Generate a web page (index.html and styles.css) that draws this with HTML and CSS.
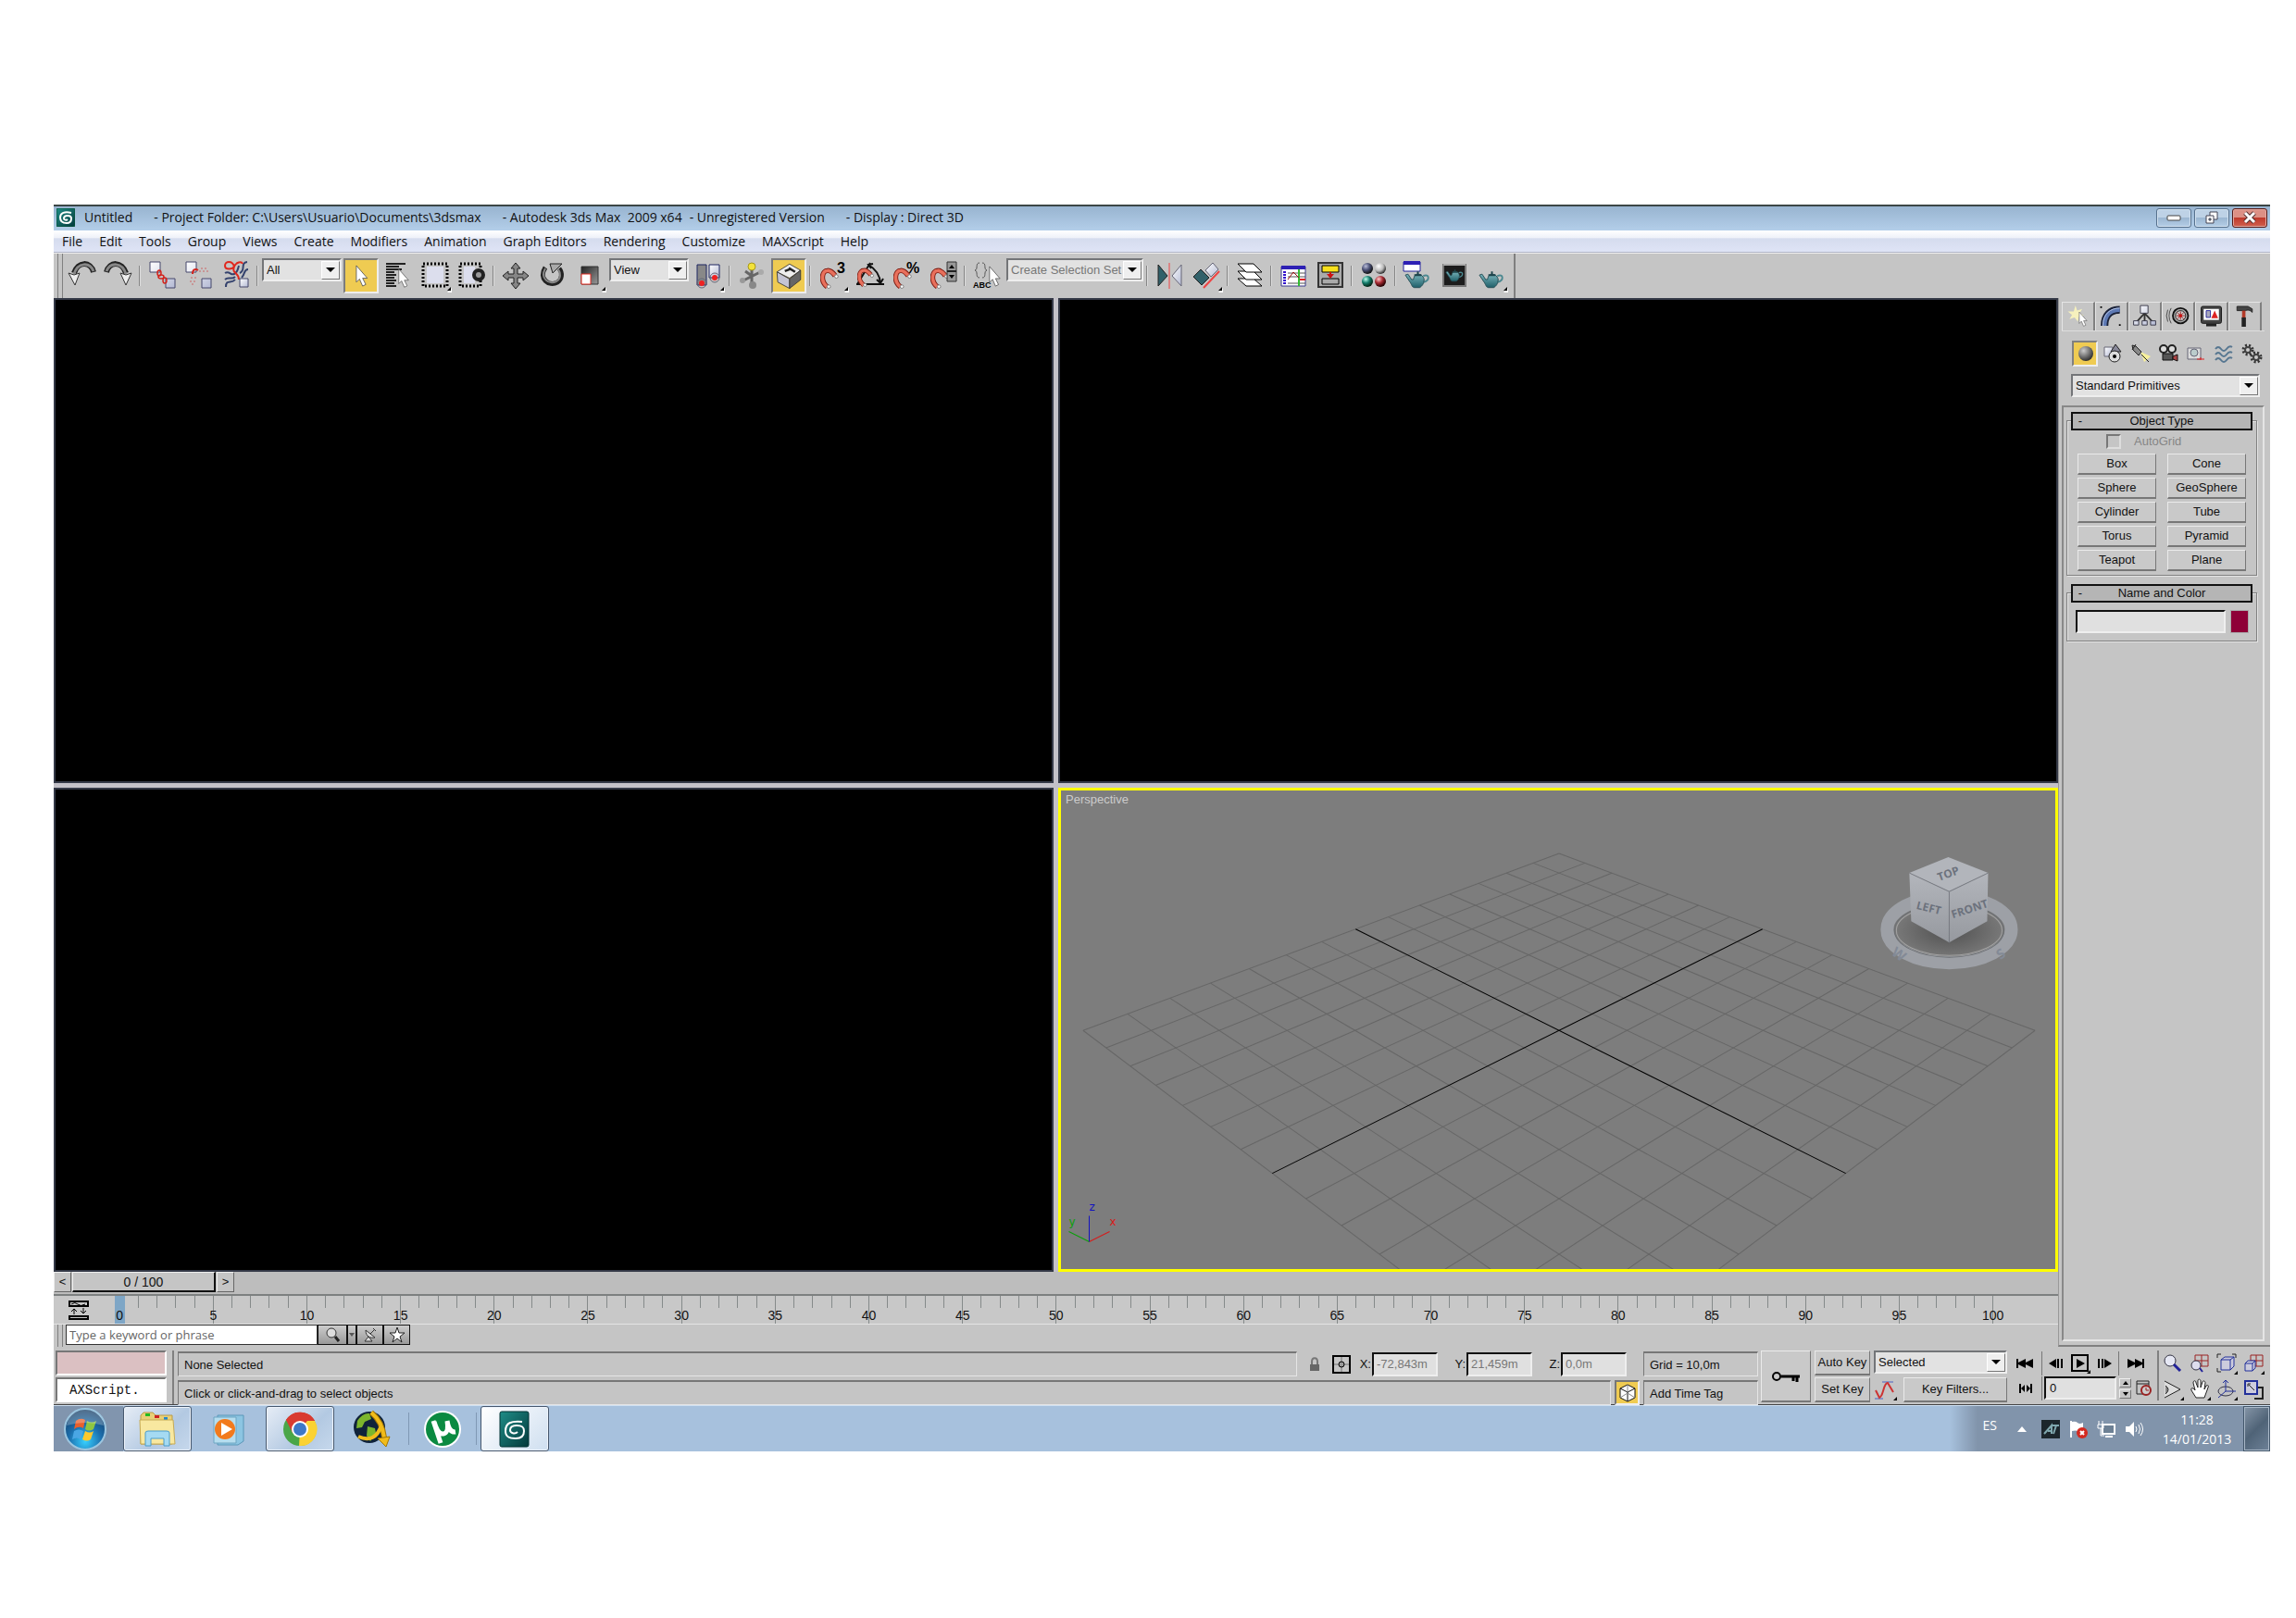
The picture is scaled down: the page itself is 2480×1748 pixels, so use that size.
FILE: index.html
```html
<!DOCTYPE html>
<html lang="en">
<head>
  <meta charset="UTF-8">
  <title>Untitled - Autodesk 3ds Max 2009 x64</title>
  <link rel="stylesheet" href="styles.css">
</head>
<body>
  <!-- shared gradients and symbols -->
  <svg class="defs" width="0" height="0" aria-hidden="true">
    <defs>
      <linearGradient id="steel" x1="0" y1="0" x2="1" y2="1"><stop offset="0" stop-color="#fff"/><stop offset="1" stop-color="#b4bad4"/></linearGradient>
      <linearGradient id="dark" x1="0" y1="0" x2="1" y2="1"><stop offset="0" stop-color="#222"/><stop offset="1" stop-color="#999"/></linearGradient>
      <linearGradient id="teal" x1="0" y1="0" x2="0" y2="1"><stop offset="0" stop-color="#79b4bb"/><stop offset="1" stop-color="#1f5f69"/></linearGradient>
      <linearGradient id="mint" x1="0" y1="0" x2="1" y2="1"><stop offset="0" stop-color="#1f8d87"/><stop offset="1" stop-color="#03393b"/></linearGradient>
      <radialGradient id="ballGray" cx=".35" cy=".3" r=".7"><stop offset="0" stop-color="#ccc"/><stop offset="1" stop-color="#333"/></radialGradient>
      <radialGradient id="ballBlue" cx=".35" cy=".3" r=".7"><stop offset="0" stop-color="#b9bdd8"/><stop offset=".5" stop-color="#4b5177"/><stop offset="1" stop-color="#111"/></radialGradient>
      <radialGradient id="ballWhite" cx=".35" cy=".3" r=".7"><stop offset="0" stop-color="#fff"/><stop offset=".6" stop-color="#bbb"/><stop offset="1" stop-color="#333"/></radialGradient>
      <radialGradient id="ballGreen" cx=".35" cy=".3" r=".7"><stop offset="0" stop-color="#bfe"/><stop offset=".5" stop-color="#157d6c"/><stop offset="1" stop-color="#021"/></radialGradient>
      <radialGradient id="ballRed" cx=".35" cy=".3" r=".7"><stop offset="0" stop-color="#fcc"/><stop offset=".5" stop-color="#a82c34"/><stop offset="1" stop-color="#200"/></radialGradient>
      <radialGradient id="orb" cx=".5" cy=".8" r=".8"><stop offset="0" stop-color="#37d0ff"/><stop offset=".5" stop-color="#1c6fae"/><stop offset="1" stop-color="#16395f"/></radialGradient>
      <linearGradient id="cubeSide" x1="0" y1="0" x2="0" y2="1"><stop offset="0" stop-color="#b3b6bc"/><stop offset="1" stop-color="#96999f"/></linearGradient>
      <radialGradient id="shade"><stop offset="0" stop-color="#505050"/><stop offset="1" stop-color="#7a7a7a"/></radialGradient>
      <symbol id="fly" viewBox="0 0 40 40"><path d="M38 33v5h-5z" fill="#fff"/><path d="M37 32v4h-4z"/></symbol>
      <symbol id="arrow" viewBox="0 0 16 28"><path d="M1 1v21l4-4 4 9 4-2-4-8h6z" fill="#fff" stroke="#555"/></symbol>
      <symbol id="magnet" viewBox="0 0 24 26"><path d="M7 23C-1 14 4 3 10 4c3 0 5 2 8 7" transform="rotate(-8 10 14)" fill="none" stroke="#7d1c12" stroke-width="6"/><path d="M7 23C-1 14 4 3 10 4c3 0 5 2 8 7" transform="rotate(-8 10 14)" fill="none" stroke="#e8705c" stroke-width="4"/><circle cx="19" cy="11" r="2" fill="#fff" stroke="#777"/><circle cx="10" cy="23" r="2" fill="#fff" stroke="#777"/></symbol>
      <symbol id="teapot" viewBox="0 0 30 20"><path d="M21 6c7-3 8 5 0 7" fill="none" stroke="#4b8890" stroke-width="2"/><path d="M1 5l3-1 4 6h2C11 5 13 4 15 4s6 1 7 6c0 5-3 8-5 9h-6c-2 0-3-3-4-5z" fill="url(#teal)" stroke="#254f56"/><path d="M11 5h8M15 1v3" stroke="#1e444b" stroke-width="2"/></symbol>
    </defs>
  </svg>

  <div class="window">
    <header class="titlebar">
      <svg class="app-icon" width="20" height="20" viewBox="0 0 20 20"><rect width="20" height="20" rx="2" fill="url(#mint)" stroke="#053"/><path d="M16 5C9 3 4 5 4 10s3 6 7 6 5-3 5-5-2-3-4-3-4 1-4 3 3 2 4 1" fill="none" stroke="#fff" stroke-width="2"/></svg>
      <span class="doc">Untitled</span>
      <span class="doc">- Project Folder: C:\Users\Usuario\Documents\3dsmax</span>
      <span>- Autodesk 3ds Max&nbsp; 2009 x64</span>
      <span class="doc near">- Unregistered Version</span>
      <span>- Display : Direct 3D</span>
      <div class="win-buttons">
        <button class="win" aria-label="Minimize"><svg width="16" height="14" viewBox="0 0 16 14"><rect x="1" y="5" width="14" height="5" rx="1" fill="#fff" stroke="#444"/></svg></button>
        <button class="win" aria-label="Restore"><svg width="16" height="16" viewBox="0 0 16 16"><path d="M6 2h8v8h-8z" fill="#fff" stroke="#445"/><path d="M2 6h8v8h-8z" fill="#fff" stroke="#445"/><path d="M5 9h2v2h-2z" fill="#8aa" stroke="#445"/></svg></button>
        <button class="win close" aria-label="Close"><svg width="16" height="14" viewBox="0 0 16 14"><path d="M3 2l10 10M13 2L3 12" stroke="#533" stroke-width="5"/><path d="M3 2l10 10M13 2L3 12" stroke="#fff" stroke-width="3"/></svg></button>
      </div>
    </header>

    <nav class="menubar">
      <a href="#">File</a><a href="#">Edit</a><a href="#">Tools</a><a href="#">Group</a><a href="#">Views</a><a href="#">Create</a><a href="#">Modifiers</a><a href="#">Animation</a><a href="#">Graph Editors</a><a href="#">Rendering</a><a href="#">Customize</a><a href="#">MAXScript</a><a href="#">Help</a>
    </nav>

    <div class="toolbar-row">
      <div class="toolbar">
        <span class="grip"></span>
        <button class="tool" aria-label="Undo"><svg viewBox="0 0 40 40"><path d="M33 16C30 4 16 4 12 17" fill="none" stroke="#222" stroke-width="6"/><path d="M33 15C29 5 16 5 12 18" fill="none" stroke="#888" stroke-width="3"/><path d="M6 17l6 2 6-2-5 13z" fill="#eee" stroke="#333"/></svg></button>
        <button class="tool" aria-label="Redo"><svg viewBox="0 0 40 40"><path d="M7 16C10 4 24 4 28 17" fill="none" stroke="#222" stroke-width="6"/><path d="M7 15C11 5 24 5 28 18" fill="none" stroke="#888" stroke-width="3"/><path d="M34 17l-6 2-6-2 6 13z" fill="#eee" stroke="#333"/></svg></button>
        <span class="sep"></span>
        <button class="tool" aria-label="Select and Link"><svg viewBox="0 0 40 40"><g fill="url(#steel)" stroke="#44476a"><path d="M7 5h11v11H7zM24 23h10v10H24z"/></g><g fill="none" stroke="#d3231c" stroke-width="1.5"><ellipse cx="17" cy="17" rx="2" ry="3"/><ellipse cx="19" cy="21" rx="3" ry="2"/><ellipse cx="23" cy="25" rx="2" ry="3"/></g></svg></button>
        <button class="tool" aria-label="Unlink Selection"><svg viewBox="0 0 40 40"><g fill="url(#steel)" stroke="#44476a"><path d="M6 5h11v11H6zM23 23h10v10H23z"/></g><path d="M13 18c0-5 3-6 6-4" fill="none" stroke="#d3231c" stroke-width="2"/><path d="M22 12h7M20 15h10M11 22h7M10 26h6M12 29h4" stroke="#c66" stroke-dasharray="2 2"/></svg></button>
        <button class="tool" aria-label="Bind to Space Warp"><svg viewBox="0 0 40 40"><g fill="none" stroke="#34426d" stroke-width="2"><path d="M8 17c5-3 6 3 10 1s4-6 5-9M8 24c4-4 7 1 11-3M9 32c0-9 6-3 10-8M32 5c-8 1-1 9-8 12M33 13c-5 0-3 5-7 9"/></g><path d="M18 10C16 3 8 4 8 9s8 4 10 1c2-5 8-6 9-3M18 10c-3 8 5 6 5 14" fill="none" stroke="#e0281e" stroke-width="2"/><path d="M24 23h9v9h-9z" fill="url(#steel)" stroke="#44476a"/></svg></button>
        <span class="sep"></span>
        <span class="combo"><select class="w86" aria-label="Selection filter"><option>All</option></select><i class="drop"></i></span>
        <button class="tool on" aria-label="Select Object"><svg viewBox="0 0 40 40"><use href="#arrow" x="13" y="6" width="16" height="28"/></svg></button>
        <button class="tool" aria-label="Select by Name"><svg viewBox="0 0 40 40"><path d="M7 7h21M7 10h14M7 13h17M7 16h9M7 19h11M7 22h9M7 25h11M7 28h9M7 31h11" stroke="#222" stroke-width="2"/><use href="#arrow" x="19" y="12" width="14" height="21"/></svg></button>
        <button class="tool" aria-label="Rectangular Selection Region"><svg viewBox="0 0 40 40"><path d="M7 7h26v24H7z" fill="none" stroke="#000" stroke-width="3" stroke-dasharray="2 2"/><path d="M11 10h18v18H11z" fill="#dcdeed"/><use href="#fly" width="40" height="40"/></svg></button>
        <button class="tool" aria-label="Window / Crossing"><svg viewBox="0 0 40 40"><path d="M7 7h22v24H7z" fill="none" stroke="#000" stroke-width="3" stroke-dasharray="2 2"/><path d="M11 10h12v18H11z" fill="#dcdeed"/><circle cx="27" cy="19" r="7" fill="#222"/><circle cx="27" cy="19" r="3" fill="#999"/></svg></button>
        <span class="sep"></span>
        <button class="tool" aria-label="Select and Move"><svg viewBox="0 0 40 40"><path d="M20 6l5 6h-3v6h6v-3l6 5-6 5v-3h-6v6h3l-5 6-5-6h3v-6h-6v3l-6-5 6-5v3h6v-6h-3z" fill="#868686" stroke="#222"/></svg></button>
        <button class="tool" aria-label="Select and Rotate"><svg viewBox="0 0 40 40"><path d="M12 11c-8 12 4 21 13 16 5-3 6-10 2-15" fill="none" stroke="#222" stroke-width="5"/><path d="M12 12c-6 11 4 18 12 14 5-3 5-9 2-13" fill="none" stroke="#888" stroke-width="2"/><path d="M17 7h13l-3 3-7 7z" fill="#aaa" stroke="#222"/></svg></button>
        <button class="tool" aria-label="Select and Scale"><svg viewBox="0 0 40 40"><path d="M11 10h18v19H11z" fill="url(#dark)" stroke="#333"/><path d="M11 18h10v11H11z" fill="#fff" stroke="#e2281e"/><use href="#fly" width="40" height="40"/></svg></button>
        <span class="combo"><select class="w86" aria-label="Reference coordinate system"><option>View</option></select><i class="drop"></i></span>
        <button class="tool" aria-label="Use Pivot Point Center"><svg viewBox="0 0 40 40"><path d="M8 8h10v22H8z" fill="#888" stroke="#1d2460"/><path d="M21 8h11v14H21z" fill="url(#steel)" stroke="#1d2460"/><g fill="none" stroke="#667"><circle cx="13" cy="28" r="5"/><circle cx="27" cy="22" r="5"/></g><circle cx="13" cy="28" r="3" fill="#e22"/><circle cx="27" cy="22" r="3" fill="#e22"/><use href="#fly" width="40" height="40"/></svg></button>
        <span class="sep"></span>
        <button class="tool" aria-label="Select and Manipulate"><svg viewBox="0 0 40 40"><path d="M20 11v18M11 25l18-9M13 15l7 5" stroke="#666" stroke-width="3"/><circle cx="20" cy="10" r="4" fill="#f3e23b" stroke="#a99a1a"/><circle cx="10" cy="25" r="3" fill="#999"/><circle cx="30" cy="16" r="3" fill="#aaa"/><circle cx="21" cy="30" r="4" fill="#888"/></svg></button>
        <button class="tool on" aria-label="Keyboard Shortcut Override"><svg viewBox="0 0 40 40"><path d="M5 15l16-10 14 8-14 10z" fill="#eee" stroke="#333"/><path d="M5 15l16 9v12L6 28z" fill="#c4c4d4" stroke="#333"/><path d="M35 13v12l-14 11V24z" fill="#666" stroke="#333"/><path d="M15 14l8-3M20 10l8 5" stroke="#222" stroke-width="3"/></svg></button>
        <span class="sep"></span>
        <button class="tool" aria-label="Snaps Toggle"><svg viewBox="0 0 40 40"><use href="#magnet" x="7" y="10" width="22" height="25"/><text x="25" y="17" class="glyph">3</text><use href="#fly" width="40" height="40"/></svg></button>
        <button class="tool" aria-label="Angle Snap Toggle"><svg viewBox="0 0 40 40"><path d="M6 29h30M7 29L21 6M19 8q12 7 13 20M28 24l4 4 3-5M24 7l-5 1 3 4" fill="none" stroke="#111" stroke-width="2"/><use href="#magnet" x="7" y="10" width="20" height="23"/></svg></button>
        <button class="tool" aria-label="Percent Snap Toggle"><svg viewBox="0 0 40 40"><use href="#magnet" x="6" y="10" width="22" height="25"/><text x="20" y="17" class="glyph">%</text></svg></button>
        <button class="tool" aria-label="Spinner Snap Toggle"><svg viewBox="0 0 40 40"><use href="#magnet" x="6" y="10" width="22" height="25"/><path d="M24 5h10v21H24z" fill="#999" stroke="#333"/><path d="M24 15h10" stroke="#222" stroke-width="2"/><path d="M26 12l3-4 3 4zM26 19h6l-3 4z"/></svg></button>
        <span class="sep"></span>
        <button class="tool" aria-label="Edit Named Selection Sets"><svg viewBox="0 0 40 40"><path d="M12 6c-5 0-1 7-5 8 4 1 0 8 5 8M15 6c5 0 1 7 5 8-4 1 0 8-5 8" fill="none" stroke="#555"/><text x="5" y="33" class="glyph small">ABC</text><use href="#arrow" x="22" y="9" width="13" height="23"/></svg></button>
        <span class="combo"><select class="w148 dim" aria-label="Named selection sets"><option>Create Selection Set</option></select><i class="drop"></i></span>
        <span class="sep"></span>
        <button class="tool" aria-label="Mirror"><svg viewBox="0 0 40 40"><path d="M8 8l10 12L8 31z" fill="#31616a" stroke="#222"/><path d="M33 8L23 20l10 11z" fill="url(#steel)" stroke="#667"/><path d="M20 6v28" stroke="#e44"/></svg></button>
        <button class="tool" aria-label="Align"><svg viewBox="0 0 40 40"><path d="M6 21l8-8 9 9-8 8z" fill="#31616a" stroke="#222"/><path d="M19 14l8-8 6 7-8 8z" fill="url(#steel)" stroke="#667"/><path d="M17 33l17-18" stroke="#e44" stroke-width="2"/><use href="#fly" width="40" height="40"/></svg></button>
        <span class="sep"></span>
        <button class="tool" aria-label="Layer Manager"><svg viewBox="0 0 40 40"><g fill="#fff" stroke="#000"><path d="M7 23h17l9 8H16z"/><path d="M7 15h17l9 9H16z"/><path d="M7 7h17l9 9H16z"/></g></svg></button>
        <span class="sep"></span>
        <button class="tool" aria-label="Curve Editor"><svg viewBox="0 0 40 40"><path d="M7 10h26v21H7z" fill="#fff" stroke="#3b3b8a"/><path d="M7 9h26v4H7z" fill="#2d20b4"/><path d="M14 17h19M14 21h19M14 28h19" stroke="#555"/><path d="M26 24h7" stroke="#d22" stroke-width="2"/><path d="M9 16h3M9 19h3M9 22h3M9 25h3M9 28h3" stroke="#31c" stroke-width="2"/><path d="M26 13v18" stroke="#3b3" stroke-width="2"/><path d="M14 24l6-8 6 6" fill="none" stroke="#911"/></svg></button>
        <button class="tool" aria-label="Schematic View"><svg viewBox="0 0 40 40"><path d="M7 6h26v26H7z" fill="#aaa" stroke="#333" stroke-width="2"/><path d="M11 9h18v7H11z" fill="#f7e01d" stroke="#000"/><path d="M11 23h18v6H11z" fill="#aaa" stroke="#000"/><path d="M20 16v4" stroke="#c11" stroke-width="2"/><path d="M16 18h8l-4 5z" fill="#c11"/></svg></button>
        <span class="sep"></span>
        <button class="tool" aria-label="Material Editor"><svg viewBox="0 0 40 40"><circle cx="13" cy="12" r="6" fill="url(#ballBlue)"/><circle cx="27" cy="12" r="6" fill="url(#ballWhite)"/><circle cx="13" cy="26" r="6" fill="url(#ballGreen)"/><circle cx="27" cy="26" r="6" fill="url(#ballRed)"/></svg></button>
        <span class="sep"></span>
        <button class="tool" aria-label="Render Setup"><svg viewBox="0 0 40 40"><path d="M5 5h18v10H5z" fill="#fff" stroke="#229"/><path d="M5 4h18v4H5z" fill="#2d20b4"/><use href="#teapot" x="6" y="14" width="29" height="20"/></svg></button>
        <button class="tool" aria-label="Rendered Frame Window"><svg viewBox="0 0 40 40"><path d="M8 8h24v23H8z" fill="#1c1c1c" stroke="#777" stroke-width="2"/><path d="M8 8h24" stroke="#aaa" stroke-width="2"/><use href="#teapot" x="10" y="12" width="21" height="15"/></svg></button>
        <button class="tool" aria-label="Quick Render"><svg viewBox="0 0 40 40"><use href="#teapot" x="6" y="14" width="29" height="20"/><use href="#fly" width="40" height="40"/></svg></button>
      </div>
    </div>

    <div class="main">
      <div class="work">
        <div class="viewports">
          <div class="view"></div>
          <div class="view"></div>
          <div class="view"></div>
          <div class="view active">
            <svg class="scene" viewBox="0 0 1074 517" preserveAspectRatio="xMidYMid slice">
              <g id="grid"></g>
              <g fill="none" stroke-width="1">
                <path d="M31 487l22-11" stroke="#d81a1a"/><path d="M31 487l-22-11" stroke="#0aa00a"/><path d="M31 487v-28" stroke="#1313c0"/>
              </g>
              <g class="axis"><text x="31" y="454" fill="#1313c0">z</text><text x="53" y="470" fill="#d81a1a">x</text><text x="9" y="470" fill="#0aa00a">y</text></g>
              <!-- view cube -->
              <ellipse cx="959" cy="151" rx="60" ry="31" fill="url(#shade)"/>
              <ellipse cx="959" cy="150" rx="67" ry="36" fill="none" stroke="#9da0a6" stroke-width="14"/>
              <ellipse cx="959" cy="151" rx="59" ry="29" fill="none" stroke="#6d7074"/>
              <ellipse cx="959" cy="151" rx="57" ry="27" fill="none" stroke="#a3a3a3"/>
              <g class="compass"><text x="897" y="181" transform="rotate(35 903 177)">W</text><text x="1011" y="181" transform="rotate(-35 1016 177)">S</text></g>
              <path d="M916 89l43 20v55l-41-23z" fill="url(#cubeSide)"/>
              <path d="M1001 89l-42 20v55l41-23z" fill="url(#cubeSide)"/>
              <path d="M958 72l43 17-42 20-43-20z" fill="#b2b5bb"/>
              <path d="M916 89l43 20 42-20M959 109v55" fill="none" stroke="#787b82"/>
              <g class="cube-text"><text x="937" y="131" transform="rotate(14 937 127)">LEFT</text><text x="981" y="132" transform="rotate(-18 981 128)">FRONT</text><text x="958" y="94" transform="rotate(-20 958 90)">TOP</text></g>
            </svg>
            <span class="view-label">Perspective</span>
          </div>
        </div>

        <div class="time-slider">
          <button class="step" aria-label="Previous frame">&lt;</button>
          <button class="thumb">0 / 100</button>
          <button class="step" aria-label="Next frame">&gt;</button>
        </div>

        <div class="trackbar">
          <button class="mini-curve" aria-label="Open Mini Curve Editor"><svg width="24" height="24" viewBox="0 0 24 24"><path d="M2 3h20v5H2zM2 19h20v3H2z" fill="none" stroke="#000" stroke-width="2"/><path d="M4 6q4-3 7 0t8 0" fill="none" stroke="#000"/><path d="M7 17v-6M4 14l3-3 3 3M17 10v6M14 13l3 3 3-3" fill="none" stroke="#000"/></svg></button>
          <div class="ruler" id="ruler"></div>
        </div>

        <div class="infocenter">
          <span class="grip"></span>
          <input type="text" class="keyword" aria-label="Search" placeholder="Type a keyword or phrase">
          <button class="info wide" aria-label="Search"><svg width="20" height="18" viewBox="0 0 20 18"><circle cx="9" cy="7" r="5" fill="#ddd" stroke="#333"/><path d="M13 11l4 5" stroke="#222" stroke-width="3"/></svg></button>
          <button class="info thin" aria-label="Search options"><svg width="6" height="4" viewBox="0 0 6 4"><path d="M0 0h6L3 4z" fill="#555"/></svg></button>
          <button class="info" aria-label="Communication Center"><svg width="18" height="18" viewBox="0 0 18 18"><path d="M4 4c0 7 5 9 10 8zM9 8l5-5M3 16l4-5 4 5z" fill="#ddd" stroke="#333"/><path d="M12 2l3 3" stroke="#333"/></svg></button>
          <button class="info" aria-label="Favorites"><svg width="18" height="18" viewBox="0 0 18 18"><path d="M9 1l2 6h6l-5 4 2 6-5-4-5 4 2-6-5-4h6z" fill="#fff" stroke="#222"/></svg></button>
        </div>
      </div>

      <aside class="panel">
        <div class="tabs">
          <button class="tab current" aria-label="Create"><svg viewBox="0 0 36 30"><path d="M15 2l2 6 6-2-3 5 5 3-6 1-1 6-4-5-6 2 3-5-5-4 7 0z" fill="#f6f1bd"/><use href="#arrow" x="17" y="9" width="14" height="18"/></svg></button>
          <button class="tab" aria-label="Modify"><svg viewBox="0 0 36 30"><path d="M10 26C10 13 17 7 28 7" fill="none" stroke="#1b2238" stroke-width="9"/><path d="M10 26C10 13 17 7 28 7" fill="none" stroke="#5d79b4" stroke-width="5"/><path d="M8 26C8 12 17 5 28 5" fill="none" stroke="#bccbe8"/><path d="M5 3h2v2H5zM27 24h2v2h-2z"/></svg></button>
          <button class="tab" aria-label="Hierarchy"><svg viewBox="0 0 36 30"><path d="M18 10v12M18 11L8 22M18 11l10 11" stroke="#333" stroke-width="2"/><path d="M13 2h9v9h-9zM5 20h6v5H5zM15 20h6v5h-6zM25 20h6v5h-6z" fill="url(#steel)" stroke="#334"/></svg></button>
          <button class="tab" aria-label="Motion"><svg viewBox="0 0 36 30"><circle cx="21" cy="14" r="9" fill="#aaa" stroke="#111" stroke-width="2"/><circle cx="21" cy="14" r="6" fill="#ccc" stroke="#222"/><path d="M21 9v10M16 14h10M17 10l8 8M25 10l-8 8" stroke="#922"/><circle cx="21" cy="14" r="2" fill="#c11"/><path d="M10 5q-5 9 0 18M6 7q-3 7 0 14" fill="none" stroke="#444"/></svg></button>
          <button class="tab" aria-label="Display"><svg viewBox="0 0 36 30"><rect x="6" y="3" width="24" height="20" rx="2" fill="#444" stroke="#111"/><path d="M9 6h18v13H9z" fill="#fff"/><path d="M12 8h5v8h-5z" fill="#aab" stroke="#229"/><path d="M22 8l4 9h-8z" fill="#d22"/><path d="M12 25h12" stroke="#222" stroke-width="3"/></svg></button>
          <button class="tab" aria-label="Utilities"><svg viewBox="0 0 36 30"><path d="M9 3h13l5 3v4c-3-3-5-3-8-2H9z" fill="#444" stroke="#222"/><path d="M17 8v10" stroke="#b33a28" stroke-width="4"/><path d="M17 16v11" stroke="#222" stroke-width="5"/></svg></button>
        </div>
        <div class="categories">
          <button class="cat on" aria-label="Geometry"><svg viewBox="0 0 28 28"><circle cx="15" cy="14" r="8" fill="url(#ballGray)"/></svg></button>
          <button class="cat" aria-label="Shapes"><svg viewBox="0 0 28 28"><path d="M5 7h9v10H5z" fill="url(#steel)" stroke="#667"/><path d="M17 4l6 8h-11z" fill="#889" stroke="#222"/><circle cx="16" cy="17" r="6" fill="#ddd" stroke="#222"/><circle cx="16" cy="17" r="2"/></svg></button>
          <button class="cat" aria-label="Lights"><svg viewBox="0 0 28 28"><path d="M14 12l11 5-7 6z" fill="#f7f09c"/><path d="M5 5l4 1 6 6-3 4-6-6z" fill="#888" stroke="#222"/><path d="M9 4l-4 6M15 15l8 8" stroke="#222"/></svg></button>
          <button class="cat" aria-label="Cameras"><svg viewBox="0 0 28 28"><circle cx="9" cy="9" r="4" fill="#ddd" stroke="#222" stroke-width="2"/><circle cx="18" cy="9" r="4" fill="#ddd" stroke="#222" stroke-width="2"/><path d="M8 14h11v7H8z" fill="#555" stroke="#111"/><path d="M19 17l5-2v7l-5-2z" fill="#a44" stroke="#111"/></svg></button>
          <button class="cat" aria-label="Helpers"><svg viewBox="0 0 28 28"><path d="M5 8h14v12H5z" fill="#ddd" stroke="#667"/><circle cx="12" cy="13" r="4" fill="#bcc" stroke="#667"/><path d="M15 20h8M19 18v3" stroke="#d22"/></svg></button>
          <button class="cat" aria-label="Space Warps"><svg viewBox="0 0 28 28"><path d="M5 9q3-4 6 0t6 0 6-2M5 15q3-4 6 0t6 0 6-2M5 21q3-4 6 0t6 0 6-2" fill="none" stroke="#567690" stroke-width="2"/></svg></button>
          <button class="cat" aria-label="Systems"><svg viewBox="0 0 28 28"><g fill="#ccc" stroke="#444" stroke-width="2"><circle cx="10" cy="10" r="3"/><circle cx="19" cy="18" r="3"/></g><g fill="none" stroke="#333" stroke-width="3" stroke-dasharray="2 2"><circle cx="10" cy="10" r="5"/><circle cx="19" cy="18" r="5"/></g></svg></button>
        </div>
        <span class="combo wide-combo"><select aria-label="Category"><option>Standard Primitives</option></select><i class="drop"></i></span>

        <div class="rollouts">
          <section class="rollout">
            <h2><span>-</span>Object Type</h2>
            <label class="autogrid"><input type="checkbox" disabled>AutoGrid</label>
            <div class="types">
              <button>Box</button><button>Cone</button>
              <button>Sphere</button><button>GeoSphere</button>
              <button>Cylinder</button><button>Tube</button>
              <button>Torus</button><button>Pyramid</button>
              <button>Teapot</button><button>Plane</button>
            </div>
          </section>
          <section class="rollout">
            <h2><span>-</span>Name and Color</h2>
            <div class="name-row"><input type="text" aria-label="Object name"><button class="swatch" aria-label="Object color"></button></div>
          </section>
        </div>
      </aside>
    </div>

    <div class="status">
      <div class="listener">
        <input type="text" class="macro" aria-label="Macro recorder">
        <input type="text" class="script" aria-label="MAXScript listener" value="AXScript.">
      </div>
      <div class="prompts">
        <div class="prompt-row">
          <div class="box grow">None Selected</div>
          <button class="plain lock" aria-label="Selection Lock Toggle"><svg width="12" height="16" viewBox="0 0 12 16"><path d="M3 8V5c0-5 6-5 6 0v3" fill="none" stroke="#777" stroke-width="2"/><path d="M1 8h10v7H1z" fill="#666"/></svg></button>
          <button class="plain" aria-label="Absolute Mode"><svg width="20" height="20" viewBox="0 0 20 20"><path d="M1 1h18v18H1z" fill="none" stroke="#000" stroke-width="2"/><path d="M10 2v16M2 10h16" stroke="#777"/><circle cx="10" cy="10" r="3" fill="#999" stroke="#000"/></svg></button>
          <label class="coord">X:<input type="text" value="-72,843m"></label>
          <label class="coord">Y:<input type="text" value="21,459m"></label>
          <label class="coord">Z:<input type="text" value="0,0m"></label>
          <div class="box side">Grid = 10,0m</div>
        </div>
        <div class="prompt-row">
          <div class="box grow">Click or click-and-drag to select objects</div>
          <button class="plain degrade" aria-label="Adaptive Degradation"><svg width="22" height="22" viewBox="0 0 22 22"><path d="M11 2l8 4v10l-8 4-8-4V6z" fill="#fff" stroke="#111"/><path d="M3 6l8 4 8-4M11 10v10" fill="none" stroke="#111"/><path d="M11 2v8M3 16l8-5 8 5" fill="none" stroke="#888"/></svg></button>
          <div class="box side">Add Time Tag</div>
        </div>
      </div>
      <button class="key-big raised" aria-label="Set Keys"><svg width="32" height="16" viewBox="0 0 32 16"><circle cx="6" cy="8" r="4" fill="none" stroke="#000" stroke-width="2"/><path d="M11 8h20M24 8v5M28 8v6" stroke="#000" stroke-width="3"/></svg></button>
      <div class="keys">
        <button class="raised">Auto Key</button>
        <span class="combo key-combo"><select aria-label="Key set"><option>Selected</option></select><i class="drop"></i></span>
        <button class="raised">Set Key</button>
        <div class="tangents">
          <button class="plain" aria-label="Default tangents"><svg width="26" height="24" viewBox="0 0 26 24"><path d="M1 21h9M9 3h12" stroke="#4a62c4"/><path d="M2 12l4 8c5-2 4-16 9-16l6 10" fill="none" stroke="#c33" stroke-width="2"/><path d="M25 19v4h-4z"/></svg></button>
          <button class="raised">Key Filters...</button>
        </div>
      </div>
      <div class="playback">
        <div class="play-row">
          <button class="plain" aria-label="Go to Start"><svg width="22" height="14" viewBox="0 0 22 14"><path d="M1 2h2v4l8-4v4l8-4v10l-8-4v4L3 8v4H1z"/></svg></button>
          <span class="bar"></span>
          <button class="plain" aria-label="Previous Frame"><svg width="18" height="14" viewBox="0 0 18 14"><path d="M1 7l8-5v10zM10 2h2v10h-2zM14 2h2v10h-2z"/></svg></button>
          <button class="plain" aria-label="Play"><svg width="22" height="22" viewBox="0 0 22 22"><path d="M2 2h17v17H2z" fill="none" stroke="#000" stroke-width="2"/><path d="M7 6l9 5-9 5zM22 18v4h-4z"/></svg></button>
          <button class="plain" aria-label="Next Frame"><svg width="18" height="14" viewBox="0 0 18 14"><path d="M17 7L9 2v10zM2 2h2v10H2zM6 2h2v10H6z"/></svg></button>
          <span class="bar"></span>
          <button class="plain" aria-label="Go to End"><svg width="22" height="14" viewBox="0 0 22 14"><path d="M21 2h-2v4l-8-4v4L3 2v10l8-4v4l8-4v4h2z"/></svg></button>
        </div>
        <div class="play-row">
          <button class="plain" aria-label="Key Mode Toggle"><svg width="22" height="12" viewBox="0 0 22 12"><path d="M4 1h2v10H4zM6 6l4-4v8zM16 1h2v10h-2zM16 6l-4-4v8z"/></svg></button>
          <span class="bar"></span>
          <input type="text" class="frame" aria-label="Current frame" value="0">
          <span class="spin"><button aria-label="Up"><svg width="6" height="4" viewBox="0 0 6 4"><path d="M0 4h6L3 0z"/></svg></button><button aria-label="Down"><svg width="6" height="4" viewBox="0 0 6 4"><path d="M0 0h6L3 4z"/></svg></button></span>
          <button class="plain" aria-label="Time Configuration"><svg width="18" height="18" viewBox="0 0 18 18"><path d="M1 1h13v14H1zM1 4h13" fill="none" stroke="#222"/><circle cx="11" cy="11" r="5" fill="#ccc" stroke="#922" stroke-width="2"/><path d="M11 8v3h3" fill="none" stroke="#922"/></svg></button>
        </div>
      </div>
      <div class="nav">
        <button class="plain" aria-label="Zoom"><svg viewBox="0 0 24 24"><circle cx="9" cy="9" r="6" fill="#e6e8f4" stroke="#334"/><path d="M13 13l7 7" stroke="#229" stroke-width="3"/></svg></button>
        <button class="plain" aria-label="Zoom All"><svg viewBox="0 0 24 24"><path d="M7 3h14v12H7zM14 3v12M7 9h14" fill="none" stroke="#922"/><circle cx="8" cy="14" r="5" fill="#dde" stroke="#334"/><path d="M12 17l3 4" stroke="#229" stroke-width="2"/></svg></button>
        <button class="plain" aria-label="Zoom Extents"><svg viewBox="0 0 24 24"><path d="M6 8h10v11H6zM6 8l4-3h10v10l-4 4M16 8l4-3" fill="#ccd" stroke="#22309a"/><path d="M2 6V2h4M18 2h4v4M2 17v4h4" fill="none" stroke="#222"/><path d="M24 20v4h-4z"/></svg></button>
        <button class="plain" aria-label="Zoom Extents All"><svg viewBox="0 0 24 24"><path d="M9 3h13v12H9zM15 3v12M9 9h13" fill="none" stroke="#922"/><path d="M3 12h8v8H3zM3 12l3-3h8v8l-3 3M11 12l3-3" fill="#ccd" stroke="#22309a"/><path d="M24 20v4h-4z"/></svg></button>
        <button class="plain" aria-label="Field of View"><svg viewBox="0 0 24 24"><path d="M3 3l17 9L3 21" fill="#ddd" stroke="#222"/><path d="M4 8q6 4 0 9" fill="#888" stroke="#222"/><path d="M24 20v4h-4z"/></svg></button>
        <button class="plain" aria-label="Pan View"><svg viewBox="0 0 24 24"><path d="M8 21l-5-8c-1-3 2-3 4 0L5 5c0-3 3-3 3 0l2 5V3c0-3 3-2 3 0v7l2-6c1-2 3-1 3 1l-1 7 2-4c2-1 3 0 2 2l-4 11z" fill="#fff" stroke="#222"/><path d="M24 20v4h-4z"/></svg></button>
        <button class="plain" aria-label="Arc Rotate"><svg viewBox="0 0 24 24"><ellipse cx="11" cy="14" rx="8" ry="5" fill="none" stroke="#334"/><path d="M11 2v12M11 14h11M11 14l-8 7M8 5l3-3 3 3" fill="none" stroke="#22309a"/><path d="M24 20v4h-4z"/></svg></button>
        <button class="plain" aria-label="Maximize Viewport Toggle"><svg viewBox="0 0 24 24"><path d="M14 10h8v12h-9" fill="none" stroke="#222" stroke-width="2"/><path d="M3 3h13v14H3z" fill="#ccd" stroke="#22309a" stroke-width="2"/><path d="M6 9V6h3M7 7l6 6" fill="none" stroke="#222"/></svg></button>
      </div>
    </div>

    <footer class="taskbar">
      <button class="start" aria-label="Start"><svg width="48" height="48" viewBox="0 0 48 48"><circle cx="24" cy="24" r="22" fill="url(#orb)" stroke="#9cc6e0" stroke-width="2"/><path d="M14 15q5-4 10-1l-2 9q-5-3-10 1z" fill="#e9602c"/><path d="M26 15q5 3 10 0l-3 9q-5 3-9 0z" fill="#8ec641"/><path d="M12 26q5-3 10 0l-3 9q-4-3-9 0z" fill="#4aa6e4"/><path d="M24 26q5 3 9 0l-3 9q-4 3-9 0z" fill="#fbc92e"/><path d="M4 20Q6 4 24 3q18 1 20 17-20-6-40 0z" fill="#fff" opacity=".25"/></svg></button>
      <button class="task open" aria-label="Explorer"><svg width="44" height="40" viewBox="0 0 44 40"><path d="M4 5l3-3h10l3 3h18v31H4z" fill="#e9cf76" stroke="#b99b46"/><path d="M9 3h5v3H9z" fill="#2b2"/><path d="M19 5h5v3h-5z" fill="#c22"/><path d="M29 7h4v3h-4z" fill="#28c"/><path d="M3 10h36l2 26H4z" fill="#f8e8a0" stroke="#c6aa55"/><path d="M9 38V24q0-2 3-2h20q3 0 3 2v14h-6v-8H15v8z" fill="#a5daf2" stroke="#4b9ccc"/></svg></button>
      <button class="task" aria-label="Media Player"><svg width="40" height="40" viewBox="0 0 40 40"><path d="M8 5h28v28l-6 4H8z" fill="#8cc5e2" stroke="#5a97b8"/><path d="M4 7h24v28H4z" fill="#b6ddee" stroke="#6ca5c2"/><circle cx="16" cy="20" r="11" fill="#f27a1c"/><path d="M12 13l12 7-12 7z" fill="#fff"/></svg></button>
      <button class="task open" aria-label="Chrome"><svg width="38" height="38" viewBox="0 0 38 38"><circle cx="19" cy="19" r="18" fill="#4aa648"/><path d="M19 19L4 9a18 18 0 0 1 31 1z" fill="#d93a30"/><path d="M19 19l8-9h8a18 18 0 0 1-17 27z" fill="#fbd233"/><path d="M19 10h16A18 18 0 0 0 4 9l7 14z" fill="#d93a30"/><circle cx="19" cy="19" r="9" fill="#fff"/><circle cx="19" cy="19" r="7" fill="#3d78c8"/></svg></button>
      <button class="task" aria-label="JDownloader"><svg width="42" height="42" viewBox="0 0 42 42"><circle cx="19" cy="19" r="17" fill="#10233a"/><path d="M6 12q6-9 13-8l2 6-7 3-3 6-6 1zM17 18l8 2 1 5-6 9-4-6zM27 7l5 5-3 4-4-5z" fill="#7cb62c"/><path d="M21 3q12 10 14 27" fill="none" stroke="#a27605" stroke-width="6"/><path d="M7 29q18 8 25-12M21 3q12 10 14 27" fill="none" stroke="#f1bc1b" stroke-width="4"/><path d="M28 31l13-2-4 11z" fill="#f1bc1b" stroke="#a27605"/></svg></button>
      <span class="task-line"></span>
      <button class="task" aria-label="uTorrent"><svg width="42" height="42" viewBox="0 0 42 42"><circle cx="21" cy="21" r="20" fill="#fff"/><circle cx="21" cy="21" r="18" fill="#0b8a41"/><path d="M11 12l8 24M12 13q4 14 10 13t4-14q2 13 9 12" fill="none" stroke="#fff" stroke-width="5"/></svg></button>
      <span class="task-line"></span>
      <button class="task open current" aria-label="3ds Max"><svg width="34" height="40" viewBox="0 0 34 40"><rect x="1" y="1" width="31" height="38" rx="2" fill="url(#mint)" stroke="#033"/><path d="M25 12c-12-1-18 1-18 10 0 7 5 8 11 8s9-3 9-8-3-6-8-6-7 2-7 5 5 5 8 2" fill="none" stroke="#fff" stroke-width="2"/></svg></button>
      <div class="tray">
        <span class="lang">ES</span>
        <button class="plain" aria-label="Show hidden icons"><svg width="10" height="6" viewBox="0 0 10 6"><path d="M0 6h10L5 0z" fill="#fff"/></svg></button>
        <button class="plain" aria-label="Graphics"><svg width="20" height="20" viewBox="0 0 20 20"><path d="M0 0h20v20H0z" fill="#1c262c"/><path d="M3 15l8-9v9M7 12h4M11 6h8M16 6l-3 9" fill="none" stroke="#7fa7ae" stroke-width="2"/></svg></button>
        <button class="plain" aria-label="Action Center"><svg width="20" height="20" viewBox="0 0 20 20"><path d="M2 1v18" stroke="#fff" stroke-width="2"/><path d="M3 2q4-1 6 1t6 0v9q-4 1-6 0t-6 0z" fill="#fff"/><circle cx="14" cy="14" r="6" fill="#d42a20"/><path d="M12 12l4 4M16 12l-4 4" stroke="#fff" stroke-width="2"/></svg></button>
        <button class="plain" aria-label="Network"><svg width="20" height="20" viewBox="0 0 20 20"><path d="M6 5h13v10H6zM9 18h8" fill="#6d8094" stroke="#fff" stroke-width="2"/><path d="M2 1v4M6 1v4M1 5h6v4H1zM4 9v8h4" fill="none" stroke="#fff"/></svg></button>
        <button class="plain" aria-label="Volume"><svg width="20" height="20" viewBox="0 0 20 20"><path d="M1 7h4l5-5v16l-5-5H1z" fill="#fff"/><path d="M12 7q2 3 0 6M15 5q3 5 0 10M17 3q5 7 0 14" fill="none" stroke="#fff"/></svg></button>
        <div class="clock"><span>11:28</span><span>14/01/2013</span></div>
        <button class="show-desktop" aria-label="Show desktop"></button>
      </div>
    </footer>
  </div>

  <script>
    const SVG = "http://www.w3.org/2000/svg";
    const grid = document.getElementById("grid");

    // ground plane point (-1..1, -1..1) to viewport
    function project(a, b) {
      const w = 1 + 0.17 * (a + b);
      return [538 + 256.8 * (a - b) / w, 259 - 128 * (a + b) / w];
    }

    function addLine(p, q, cls) {
      const line = document.createElementNS(SVG, "line");
      line.setAttribute("x1", p[0]);
      line.setAttribute("y1", p[1]);
      line.setAttribute("x2", q[0]);
      line.setAttribute("y2", q[1]);
      line.setAttribute("class", cls);
      grid.appendChild(line);
    }

    for (let i = -7; i <= 7; i++) {
      if (i === 0) continue;
      addLine(project(i / 7, -1), project(i / 7, 1), "grid-line");
      addLine(project(-1, i / 7), project(1, i / 7), "grid-line");
    }
    addLine(project(0, -1), project(0, 1), "grid-axis");
    addLine(project(-1, 0), project(1, 0), "grid-axis");

    // frame ticks 0..100
    const ruler = document.getElementById("ruler");
    for (let f = 0; f <= 100; f++) {
      const tick = document.createElement("span");
      tick.className = "tick";
      if (f % 5 === 0) {
        tick.classList.add("major");
        tick.innerHTML = `<span>${f}</span>`;
      }
      if (f === 0) tick.classList.add("now");
      ruler.appendChild(tick);
    }
  </script>
</body>
</html>
```
FILE: styles.css
```css
* { box-sizing: border-box; }
body {
  margin: 0;
  padding: 221px 28px 180px 58px;
  min-height: 100vh;
  display: flex;
  background: #fff;
  color: #111;
  font: 13px/16px "Liberation Sans", Arial, sans-serif;
}
button, input, select { font: inherit; color: inherit; margin: 0; border-radius: 0; }
button { padding: 0; border: 0; background: none; white-space: nowrap; }
svg { display: block; }
.defs { position: absolute; }
.window { flex: 1; min-width: 0; display: flex; flex-direction: column; background: #c5c5c5; }

/* title and menu */
.titlebar {
  height: 28px; display: flex; align-items: center; gap: 23px; padding: 0 3px 2px;
  border-top: 2px solid #3b4646;
  background: linear-gradient(#98b4d0, #b3cee9);
  font: 14px/20px "Open Sans", "Noto Sans", sans-serif;
  white-space: pre;
}
.app-icon { margin-right: -13px; }
.titlebar .near { margin-left: -15px; }
.win-buttons { margin-left: auto; display: flex; gap: 3px; }
.win {
  width: 38px; height: 21px; display: grid; place-items: center;
  border: 1px solid #56708c; border-radius: 3px; box-shadow: inset 0 0 0 1px #d3e2f1;
  background: linear-gradient(#bed2e6 45%, #9cb7d2 50%, #b4cde6);
}
.close { border-color: #591b17; background: linear-gradient(#dc9085 45%, #bf3a2c 50%, #d0604e); box-shadow: inset 0 0 0 1px #e3aaa2; }
.menubar {
  height: 24px; display: flex; align-items: center; gap: 18px; padding-left: 9px;
  background: linear-gradient(#fff, #eef1f9 35%, #d5dcee 38%, #dfe4f6);
  border-bottom: 1px solid #b0b4c6;
  font: 14px/20px "Open Sans", "Noto Sans", sans-serif;
}
.menubar a { color: #111; text-decoration: none; }

/* main toolbar */
.toolbar-row { height: 49px; display: flex; border-top: 1px solid #eee; }
.toolbar { display: flex; align-items: center; padding-right: 4px; border-right: 2px solid #808080; }
.grip { width: 6px; margin: 0 0 0 4px; border: solid #808080; border-width: 0 1px; align-self: stretch; }
.sep { width: 2px; height: 22px; margin: 0 3px 0 2px; background: #858585; border-right: 1px solid #ddd; }
.tool { width: 40px; height: 40px; flex: none; }
.tool svg { width: 40px; height: 40px; }
.tool.on { width: 38px; margin: 0 1px; height: 38px; background: #efcb52; border: 2px solid; border-color: #7c7c7c #eee #eee #7c7c7c; }
.tool.on svg { width: 34px; height: 34px; }
.glyph { font: bold 16px "Liberation Sans", Arial, sans-serif; }
.glyph.small { font-size: 9px; }

.combo { display: inline-grid; align-items: center; }
.combo > * { grid-area: 1 / 1; }
.toolbar .combo { align-self: flex-start; margin: 5px 1px 0; }
.combo select {
  appearance: none; height: 25px; width: 100%; padding: 0 19px 0 3px;
  background: #e2e2e2; border: 2px solid; border-color: #737578 #eee #eee #737578;
}
.combo .w86 { width: 86px; }
.combo .w148 { width: 148px; }
.combo .dim { color: #777; }
.drop {
  justify-self: end; width: 20px; height: 20px; margin-right: 2px; pointer-events: none;
  display: grid; place-items: center; background: #efefef;
  border: 1px solid; border-color: #fff #777 #777 #fff;
}
.drop::before { content: ""; border: 5px solid transparent; border-top-color: #000; border-bottom: 0; }

/* viewports */
.main { flex: 1; display: flex; }
.work { flex: 1; min-width: 0; display: flex; flex-direction: column; }
.viewports { flex: 1; display: grid; grid-template: 1fr 1fr / 1fr 1fr; gap: 5px; background: #c3c1c8; }
.view { background: #000; border: 2px solid #343947; }
.view.active { position: relative; overflow: hidden; background: #7d7d7d; border: 3px solid #ff0; }
.scene { position: absolute; inset: 0; width: 100%; height: 100%; }
.view-label { position: relative; display: block; padding: 2px 5px; color: #ccc; }
.grid-line { stroke: #666; stroke-width: 1; }
.grid-axis { stroke: #000; stroke-width: 1; }
.axis { font: 12px "DejaVu Sans", sans-serif; }
.cube-text { font: bold 12px "Open Sans", sans-serif; fill: #6c727d; text-anchor: middle; }
.compass { font: bold 15px "Open Sans", sans-serif; fill: #838a96; }

/* time controls */
.time-slider { height: 24px; display: flex; gap: 1px; background: #bdbdbd; padding-bottom: 2px; }
.time-slider button { border: 1px solid; border-color: #eee #666 #666 #eee; background: #c5c5c5; }
.time-slider .step { width: 19px; }
.time-slider .thumb { width: 155px; border-right: 2px solid #111; border-bottom: 2px solid #111; font-size: 14px; }
.trackbar { height: 33px; display: flex; background: #c8c8c8; border-top: 2px solid #7d8080; border-bottom: 1px solid #e4e4e4; padding-right: 60px; }
.mini-curve { width: 61px; padding-left: 15px; }
.ruler { flex: 1; display: flex; font-size: 14px; }
.tick { flex: 1 1 0; width: 0; display: flex; justify-content: center; background: linear-gradient(#858a8a, #858a8a) center top / 1px 13px no-repeat; }
.tick.major { background-size: 1px 100%; padding-top: 13px; }
.tick.now { background: linear-gradient(#7ea6c6, #7ea6c6) center / 11px 100% no-repeat; }
.tick span { flex: none; }
.infocenter { height: 24px; display: flex; align-items: flex-start; }
.infocenter .grip { margin-right: 3px; }
.keyword { width: 272px; height: 22px; padding: 0 3px; border: 1px solid #333; background: #fff; font: 13px "Open Sans", sans-serif; }
.keyword::placeholder { color: #666; opacity: 1; }
.info { width: 29px; height: 22px; display: grid; place-items: center; border: 1px solid #111; background: linear-gradient(#ccc, #999); }
.info.wide { width: 32px; }
.info.thin { width: 10px; }

/* command panel */
.panel { width: 229px; padding: 4px 6px 0 3px; display: flex; flex-direction: column; border-left: 1px solid #999; border-bottom: 2px solid #808080; }
.tabs { display: flex; border-bottom: 1px solid #ddd; }
.tab { width: 36px; height: 31px; border: solid; border-width: 1px 2px 0 1px; border-color: #e5e5e5 #808080 #ddd #e5e5e5; }
.tab svg { width: 33px; height: 30px; }
.categories { display: flex; gap: 2px; margin: 10px 0 8px 11px; }
.cat { width: 28px; height: 28px; }
.cat.on { background: #efcb52; border: 2px solid; border-color: #808080 #eee #eee #808080; }
.cat.on svg { margin: -2px; width: 28px; height: 28px; }
.cat svg { width: 28px; height: 28px; }
.wide-combo { margin: 0 5px 9px 10px; }
.rollouts { flex: 1; padding: 14px 6px 0 3px; margin-bottom: 4px; border: 2px solid; border-color: #888 #e5e5e5 #e5e5e5 #888; }
.rollout { border: 1px solid #808080; box-shadow: inset 1px 1px #e5e5e5, 1px 1px #e5e5e5; padding: 0 4px 4px; margin-bottom: 18px; }
.rollout h2 { margin: -10px 0 4px; height: 20px; border: 2px solid #111; background: #b5b5b5; font: inherit; text-align: center; display: flex; justify-content: center; }
.rollout h2 span { width: 16px; margin-right: auto; }
.rollout h2::after { content: ""; width: 16px; margin-left: auto; }
.autogrid { display: flex; align-items: center; gap: 14px; color: #858585; margin: 0 0 5px 38px; }
.autogrid input { appearance: none; width: 16px; height: 16px; margin: 0; border: 2px solid; border-color: #777 #ddd #ddd #777; }
.types { display: grid; grid-template-columns: 1fr 1fr; gap: 3px 12px; padding: 0 7px; }
.types button, .raised { background: #c9c9c9; border: 1px solid; border-color: #eaeaea #777 #777 #eaeaea; border-bottom-width: 2px; }
.types button { height: 23px; }
.name-row { display: flex; gap: 5px; padding: 4px 4px 4px 5px; }
.name-row input { flex: 1; min-width: 0; height: 25px; border: 2px solid; border-color: #111 #eee #eee #111; background: #e0e0e0; }
.swatch { width: 20px; height: 25px; background: #8e0037; border: 1px solid #aaa; }

/* status bar */
.status { height: 63px; display: flex; padding-top: 4px; border-bottom: 1px solid #444; }
.plain { display: grid; place-items: center; }
.listener { width: 130px; display: flex; flex-direction: column; gap: 2px; padding: 0 8px 0 2px; border-right: 2px solid #808080; }
.listener input { width: 120px; height: 27px; border: 2px solid; border-color: #777 #fff #fff #777; }
.macro { background: #dbc0c2; }
.script { background: #fff; padding: 0 13px; font: 14px "Liberation Mono", monospace; }
.prompts { flex: 1; min-width: 0; padding: 1px 3px 0 4px; display: flex; flex-direction: column; gap: 4px; }
.prompt-row { display: flex; align-items: center; gap: 4px; }
.box { height: 27px; padding: 5px 6px; border: 1px solid; border-top-width: 2px; border-color: #777 #e5e5e5 #e5e5e5 #777; }
.grow { flex: 1; }
.side { width: 124px; }
.lock { width: 30px; }
.coord { display: flex; align-items: center; width: 98px; justify-content: flex-end; gap: 1px; }
.coord:first-of-type { width: 90px; }
.coord input { width: 71px; height: 26px; padding: 0 3px; color: #777; background: #e0e0e0; border: 2px solid; border-color: #111 #eee #eee #111; }
.coord + .side { margin-left: 14px; }
.degrade { width: 27px; height: 27px; background: #efcb52; border: 2px solid; border-color: #777 #eee #eee #777; }
.key-big { width: 54px; height: 56px; display: grid; place-items: center; }
.keys { display: grid; grid-template: 27px 27px / 60px 144px; gap: 2px 4px; margin-left: 4px; }
.key-combo { align-self: start; }
.tangents { display: flex; gap: 6px; }
.tangents .raised { flex: 1; }
.playback { width: 164px; padding-left: 9px; border-right: 2px solid #808080; margin-bottom: 4px; display: flex; flex-direction: column; }
.play-row { display: flex; align-items: center; height: 28px; gap: 6px; }
.bar { width: 1px; height: 26px; background: #777; }
.frame { width: 78px; height: 25px; margin-left: -4px; padding: 0 4px; border: 2px solid; border-color: #111 #eee #eee #111; background: #e0e0e0; }
.spin { display: grid; gap: 2px; width: 13px; margin: 0 -1px 0 -3px; }
.spin button { height: 10px; display: grid; place-items: center; border: 1px solid; border-color: #eee #777 #777 #eee; }
.nav { display: grid; grid-template: 28px 28px / repeat(4, 29px); margin-right: 4px; }
.nav svg { width: 24px; height: 24px; }

/* windows taskbar */
.taskbar { height: 50px; display: flex; background: #a7c1dd; border-top: 1px solid #cfe0f2; }
.start { width: 75px; padding-left: 10px; background: #8195ae; }
.task { width: 80px; display: grid; place-items: center; border-radius: 3px; }
.task.open { width: 74px; border: 1px solid #47586e; box-shadow: inset 0 0 0 1px #eef4fb; background: linear-gradient(135deg, #e6edf6, #b3c9e2 60%, #c6d8ec); }
.task.current { background: linear-gradient(135deg, #fff, #cfdff0); margin-left: 4px; }
.task-line { width: 1px; margin: 7px 0; background: #8098b4; }
.task-line + .task { width: 72px; }
.task-line + .task.current { width: 74px; }
.tray { margin-left: auto; display: flex; align-items: center; gap: 10px; padding-left: 36px; color: #fff; background: linear-gradient(90deg, #a7c1dd, #8194ab 30px); font: 14px/21px "Open Sans", "Noto Sans", sans-serif; }
.lang { margin: -8px 12px 0 0; }
.tray .plain:nth-of-type(1) { margin-right: 6px; }
.clock { width: 96px; margin-right: -8px; display: flex; flex-direction: column; align-items: center; }
.show-desktop { width: 29px; align-self: stretch; border: 1px solid #44586c; box-shadow: inset 0 0 0 1px #a9b8c8; background: linear-gradient(135deg, #8696a8, #4f6377 50%, #6d8197); }
```
